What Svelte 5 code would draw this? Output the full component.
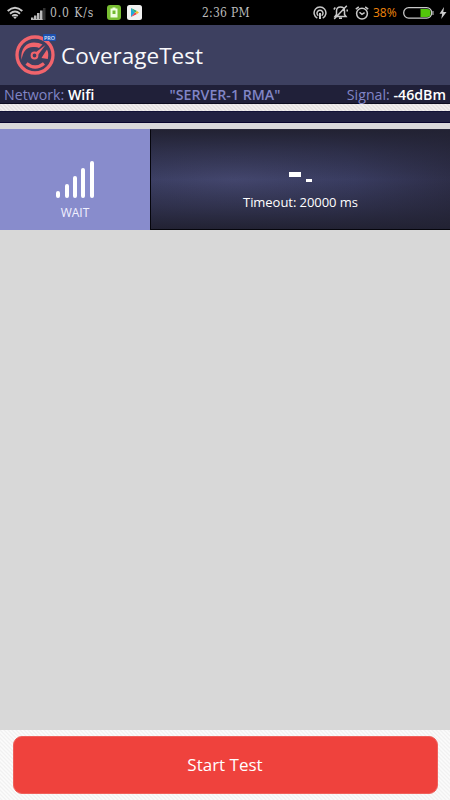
<script>
  const network = 'Wifi';
  const server = '"SERVER-1 RMA"';
  const signal = '-46dBm';
  const timeout = 20000;
  const bars = [7, 14, 22, 30, 37];
</script>

<div class="screen">
  <div class="status">
    <svg class="wifi" width="16" height="14" viewBox="0 0 16 14" fill="none" stroke="#c9c9c9" stroke-width="1.9">
      <path d="M.7 5Q8-1.5 15.3 5M3 7.7q5-4.2 10 0M5.2 10.1q2.8-2.2 5.6 0" />
      <path d="M6.300 11.200Q8 10 9.700 11.200L8 13z" fill="#c9c9c9" stroke="none" />
    </svg>
    <svg class="cell" width="15" height="12" viewBox="0 0 15 12">
      <path d="M0 9.500h2.500V12H0zM3 7.500h2.500V12H3zM6 5h2.500v7H6zM9 2.500h2.500V12H9z" fill="#bbb" /><path d="M12 0h2.500v12H12z" fill="#333" />
      <path d="M0 11h11.500v1H0z" fill="#bbb" />
    </svg>
    <span class="speed">0.0 K/s</span>
    <svg class="app1" width="14" height="15" viewBox="0 0 14 15">
      <rect width="14" height="15" rx="3" fill="#78be32" />
      <path d="M5.500 2.500h3v1H10.500V12.500h-7v-9h2z" fill="#efffdf" /><path d="M5.500 5.500h3v3.500h-3z" fill="#70ba30" />
    </svg>
    <svg class="app2" width="15" height="15" viewBox="0 0 15 15">
      <rect width="15" height="15" rx="2.500" fill="#f1f1f1" />
      <path d="M4 3v9l4-4.500z" fill="#20a9d8" /><path d="M4 3l4 4.500 2-1.500z" fill="#22ad70" />
      <path d="M4 12l4-4.500L10 9z" fill="#e63b50" /><path d="M10 6l2 1.500L10 9 8 7.500z" fill="#f5b725" />
    </svg>
    <span class="time">2:36 PM</span>
    <svg class="hot" width="14" height="14" viewBox="0 0 14 14" fill="none" stroke="#c9c9c9" stroke-width="1.500">
      <path d="M4.300 12.100a5.900 5.900 0 1 1 5.400 0M5.300 9.600a3 3 0 1 1 3.400 0" /><path d="M7 7v6" stroke-width="2" />
    </svg>
    <svg class="bell" width="15" height="15" viewBox="0 0 15 15" fill="none" stroke="#c9c9c9" stroke-width="1.500">
      <path d="M2 11.500h11l-1.500-2V6q0-4-4-4t-4 4v3.500zM6 13.300h3M13.800.8L1.200 14M.8 4.500l1.500-2M14.200 6.500v-2" />
    </svg>
    <svg class="alarm" width="14" height="14" viewBox="0 0 14 14" fill="none" stroke="#c9c9c9" stroke-width="1.500">
      <circle cx="7" cy="7.600" r="5.400" /><path d="M.8 3.200L3.800.9M10.200.9l3 2.300M4.500 6.200L7 8.400l2.600-1.700" />
    </svg>
    <span class="percent">38%</span>
    <svg class="battery" width="31" height="12" viewBox="0 0 31 12">
      <rect x=".7" y=".7" width="28" height="10.400" rx="5" fill="none" stroke="#c9c9c9" stroke-width="1.300" />
      <path d="M17.500 2H24q3.500 0 3.500 3v2q0 3-3.500 3h-6.500z" fill="#52c60b" /><path d="M29.500 4h1v4h-1z" fill="#c9c9c9" />
    </svg>
    <svg class="bolt" width="8" height="12" viewBox="0 0 8 12"><path d="M5 0L.5 6.700h2.700L2.200 12 7.500 5H4.300z" fill="#ccc" /></svg>
  </div>

  <header>
    <svg class="logo" width="42" height="42" viewBox="0 0 42 42">
      <circle cx="20" cy="21" r="18" fill="none" stroke="#f1646c" stroke-width="3.300" />
      <path d="M6.500 26C5 14 12 8.500 19 8.500q5 0 8.500 2L24 14q-2-1.500-6-1C11 13 8 18 6.500 26zM28 21.500l4-6q2 4 .8 9.500l-6.300-1z" fill="#f1646c" />
      <path d="M11.500 29.500q8.500 7 17.500 0" fill="none" stroke="#f1646c" stroke-width="3.300" />
      <circle cx="19.500" cy="21.500" r="2.900" fill="#3d4060" stroke="#f1646c" stroke-width="2" />
      <path d="M20.500 18.500L30.500 11 23 21z" fill="#f1646c" />
      <rect x="28" y="0" width="13" height="7" rx="1" fill="#1d50ae" />
      <text x="29" y="5.800" font-family="Open Sans, sans-serif" font-size="6" font-weight="600" textLength="11" lengthAdjust="spacingAndGlyphs" fill="#dfebff">PRO</text>
    </svg>
    <h1>CoverageTest</h1>
  </header>

  <div class="info">
    <span class="net">Network: <b>{network}</b></span>
    <span class="server">{server}</span>
    <span class="sig">Signal: <b>{signal}</b></span>
  </div>
  <div class="hatch"></div>
  <div class="strip"></div>
  <div class="gap"></div>

  <section>
    <div class="wait">
      <div class="bars">
        {#each bars as h}<i style="height:{h}px"></i>{/each}
      </div>
      <span>WAIT</span>
    </div>
    <div class="result">
      <div class="dashes"><i></i><i></i></div>
      <p>Timeout: {timeout} ms</p>
    </div>
  </section>

  <main></main>
  <footer><button>Start Test</button></footer>
</div>

<style>
  :global(body) { margin: 0; background: #d8d8d8; }
  .screen { width: 450px; height: 800px; display: flex; flex-direction: column; overflow: hidden; background: #d8d8d8; font-family: "Open Sans", sans-serif; }
  .screen > * { flex-shrink: 0; box-sizing: border-box; }
  svg { display: block; flex: none; }
  .status { height: 25px; background: #000; display: flex; align-items: center; color: #bcbcbc; font: 12px/26px "DejaVu Serif Condensed", "DejaVu Serif", serif; font-stretch: condensed; white-space: nowrap; }
  .status span { flex: none; }
  .wifi { margin-left: 7px; }
  .cell { margin-left: 8px; margin-top: 2px; }
  .speed { margin-left: 4px; width: 57px; letter-spacing: .9px; }
  .app2 { margin-left: 6px; }
  .time { margin-left: 60px; width: 111px; letter-spacing: .25px; }
  .bell { margin-left: 6px; }
  .alarm { margin-left: 7px; }
  .percent { margin-left: 4px; width: 30px; color: #f0860c; font: 12px/25px "Open Sans", sans-serif; }
  .bolt { margin-left: 5px; }
  header { height: 60px; background: #3d4060; display: flex; align-items: center; padding-left: 15px; }
  h1 { margin: 1px 0 0 4px; font-weight: 400; font-size: 22.500px; line-height: 30px; color: #f8f8fb; }
  .info { height: 19px; background: #202039; border-bottom: 1px solid #0d0d20; display: grid; grid-template-columns: 1fr auto 1fr; padding: 0 4px; font-size: 14.200px; line-height: 19px; color: #8185c6; white-space: nowrap; }
  .sig { text-align: right; }
  .info b { color: #fff; font-weight: 550; }
  .server { font-weight: 550; }
  .hatch { height: 7px; }
  .hatch, footer { background: repeating-linear-gradient(45deg, #fcfcfc 0, #f1f1f1 1.414px, #fcfcfc 2.828px); }
  .hatch { background: repeating-linear-gradient(45deg, #f3f0f0 0, #e2dfdf 1.414px, #f3f0f0 2.828px); }
  .strip { height: 12px; background: #212141; border-top: 1px solid #111136; border-bottom: 1px solid #07042e; }
  .gap { height: 6px; background: #d8d7da; }
  section { height: 101px; display: flex; }
  .wait { width: 150px; background: #888ccc; display: flex; flex-direction: column; align-items: center; color: #f1f1ff; font-size: 12px; line-height: 16px; }
  .bars { height: 37px; margin: 32px 0 7px; display: flex; align-items: flex-end; gap: 4.300px; }
  .bars i { width: 4px; border-radius: 2px; background: #fff; }
  .result { flex: 1; border-left: 1px solid #05050c; border-bottom: 1px solid #05050c; border-top: 1px solid #27273b; box-sizing: border-box; background: linear-gradient(#222233, #22223380 22%, #22223300 50%, #22223380 78%, #222233), radial-gradient(ellipse 240px 130px at 28% 50%, #43466d, #393c60 50%, #2b2b43); display: flex; flex-direction: column; align-items: center; }
  .dashes { display: flex; align-items: flex-start; gap: 5px; margin-top: 42px; height: 11px; }
  .dashes i { width: 12px; height: 5px; background: #fff; }
  .dashes i + i { width: 6px; height: 3px; margin-top: 7px; }
  p { margin: 9px 0 0; color: #fff; font-size: 13px; font-weight: 500; letter-spacing: -.05px; line-height: 20px; }
  main { flex: 1; }
  footer { height: 70px; padding: 6px 12.500px; }
  button { display: block; width: 425px; height: 58px; border: 1px solid #f0605b; border-radius: 9px; background: #ef423d; color: #fff; font: 17px/24px "Open Sans", sans-serif; padding: 0; }
</style>
